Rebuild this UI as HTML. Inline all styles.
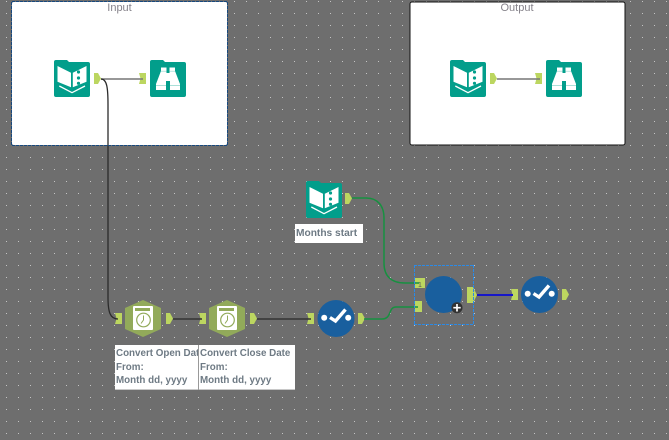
<!DOCTYPE html>
<html>
<head>
<meta charset="utf-8">
<style>
html,body{margin:0;padding:0;background:#6e6e6e}
body{width:669px;height:440px;overflow:hidden;position:relative;
background-image:linear-gradient(to bottom,transparent 1px,#6e6e6e 1px),linear-gradient(to right,#c4c4c4 1px,#6e6e6e 1px);
background-size:12px 12px,12px 12px;background-position:6px 1px,6px 1px}
svg{position:absolute;left:0;top:0;display:block}
text{font-family:"Liberation Sans",sans-serif}
.lb{font-size:9.8px;font-weight:bold;fill:#6e7a84}
.tt{font-size:11px;fill:#85828a}
.h,.v{position:absolute}
.h{height:1px;background:repeating-linear-gradient(to right,var(--c) 0 3px,transparent 3px 4px)}
.v{width:1px;background:repeating-linear-gradient(to bottom,var(--c) 0 3px,transparent 3px 4px)}
.s{--c:#2b8ae6}
.g{--c:#17497f}
</style>
</head>
<body>
<svg width="669" height="440" viewBox="0 0 669 440" xmlns="http://www.w3.org/2000/svg">
<defs>
<symbol id="book" viewBox="0 0 36 37" overflow="visible">
<path d="M2 0H13L15 2H34Q36 2 36 4V35Q36 37 34 37H2Q0 37 0 35V2Q0 0 2 0Z" fill="#029e8b"/>
<path d="M3.500 6L17 12.700V27.300L3.500 21.700Z" fill="#fff"/>
<path d="M32.500 6L18.800 12.700V27.300L32.500 21.700Z" fill="#fff"/>
<path d="M5.300 26L18 32.700L31 26" fill="none" stroke="#fff" stroke-width="1.300"/>
<circle cx="24.500" cy="12" r="1.600" fill="#029e8b"/>
<circle cx="24.500" cy="18" r="1.600" fill="#029e8b"/>
<circle cx="24.500" cy="23.300" r="1.600" fill="#029e8b"/>
</symbol>
<symbol id="bino" viewBox="0 0 36 37" overflow="visible">
<path d="M2 0H13L15 2H34Q36 2 36 4V35Q36 37 34 37H2Q0 37 0 35V2Q0 0 2 0Z" fill="#029e8b"/>
<path d="M11 7.500H16.500V13H19.500V7.500H25V11L30 24V30H20V21H16V30H6V24L11 11Z" fill="#fff"/>
<path d="M6 25.500H16M20 25.500H30" stroke="#8fd6cc" stroke-width="0.800"/>
<path d="M11 11.200H16.500M19.500 11.200H25" stroke="#8fd6cc" stroke-width="0.700"/>
</symbol>
<symbol id="hex" viewBox="0 0 37 37" overflow="visible">
<path d="M18 0L36 8V29L18 37L0 29V8Z" fill="#92aa5a"/>
<rect x="8" y="6" width="20" height="24" rx="1" fill="#fff"/>
<rect x="10" y="8" width="15" height="3" fill="#92aa5a"/>
<circle cx="18.500" cy="20" r="6.800" fill="none" stroke="#92aa5a" stroke-width="1.200"/>
<path d="M18.500 15.500V20L16 23.500" fill="none" stroke="#92aa5a" stroke-width="1"/>
</symbol>
<symbol id="chk" viewBox="0 0 37 37" overflow="visible">
<circle cx="18.500" cy="18.500" r="18.500" fill="#195f9e"/>
<circle cx="6.700" cy="17.700" r="3" fill="#fff"/>
<circle cx="30.700" cy="17.700" r="3" fill="#fff"/>
<path d="M12.500 17.500L18 21L28 9.500" fill="none" stroke="#fff" stroke-width="3.400"/>
</symbol>
<symbol id="out" viewBox="0 0 7 11" overflow="visible">
<path d="M0 0H4L7 5.500L4 11H0Z" fill="#bcd660"/>
</symbol>
<symbol id="inp" viewBox="0 0 7 11" overflow="visible">
<path d="M0 0H7V11H0L1.500 5.500Z" fill="#bcd660"/>
</symbol>
</defs>

<rect x="12" y="2" width="215" height="143" rx="2" fill="#fff"/>
<rect x="410" y="2" width="215" height="143" rx="2" fill="#fff" stroke="#111" stroke-width="1"/>
<text x="119.500" y="11" text-anchor="middle" class="tt">Input</text>
<text x="517" y="11" text-anchor="middle" class="tt">Output</text>

<rect x="295" y="224" width="68" height="19" fill="#fff"/>
<rect x="115" y="345" width="84" height="45" fill="#fff"/>
<rect x="199" y="345" width="96" height="45" fill="#fff"/>
<rect x="115" y="389" width="180" height="1" fill="#c8c8c8"/>
<rect x="198" y="345" width="1" height="45" fill="#999"/>

<svg x="115" y="345" width="83" height="45">
<text x="1" y="11" class="lb">Convert Open Date</text>
<text x="1" y="25" class="lb">From:</text>
<text x="1" y="38" class="lb">Month dd, yyyy</text>
</svg>
<text x="200" y="356" class="lb">Convert Close Date</text>
<text x="200" y="370" class="lb">From:</text>
<text x="200" y="383" class="lb">Month dd, yyyy</text>
<text x="296" y="236" class="lb" style="font-size:10.200px">Months start</text>

<use href="#book" x="54" y="60" width="36" height="37"/>
<use href="#bino" x="150" y="60" width="36" height="37"/>
<use href="#book" x="450" y="60" width="36" height="37"/>
<use href="#bino" x="546" y="60" width="36" height="37"/>
<use href="#book" x="306" y="181" width="36" height="37"/>

<use href="#out" x="94" y="73" width="7" height="11"/>
<use href="#inp" x="139" y="73" width="7" height="11"/>
<use href="#out" x="490" y="73" width="7" height="11"/>
<use href="#inp" x="535" y="73" width="7" height="11"/>
<use href="#out" x="345" y="193" width="7" height="11"/>

<use href="#hex" x="125" y="300" width="37" height="37"/>
<use href="#hex" x="209" y="300" width="37" height="37"/>
<use href="#chk" x="317.500" y="300" width="37" height="37"/>
<use href="#chk" x="521" y="276" width="37" height="37"/>
<circle cx="443.500" cy="294.500" r="18.500" fill="#195f9e"/>

<use href="#inp" x="115" y="313" width="7" height="11"/>
<use href="#out" x="166" y="313" width="7" height="11"/>
<use href="#inp" x="199" y="313" width="7" height="11"/>
<use href="#out" x="250" y="313" width="7" height="11"/>
<use href="#inp" x="307" y="313" width="7" height="11"/>
<use href="#out" x="358" y="313" width="7" height="11"/>
<rect x="415" y="278" width="10" height="10" fill="#bcd660"/>
<text x="418" y="287" font-size="7" fill="#555">1</text>
<rect x="415" y="301" width="7" height="11" fill="#bcd660"/>
<path d="M467 287H473L477 295L473 303H467Z" fill="#bcd660"/>
<use href="#inp" x="511" y="289" width="7" height="11"/>
<use href="#out" x="562" y="289" width="7" height="11"/>

<path d="M101 79H143" fill="none" stroke="#777" stroke-width="1.600"/>
<path d="M497 79H540" fill="none" stroke="#777" stroke-width="1.600"/>
<path d="M101 79C107 79 108 88 108 105V297C108 312 110 319 118 319" fill="none" stroke="#2b2b2b" stroke-width="1.300"/>
<path d="M173 319H202M257 319H311" fill="none" stroke="#333" stroke-width="1.600"/>
<path d="M352 198H366C378 198 384 206 384 218V263C384 276 391 283 405 283H419" fill="none" stroke="#179140" stroke-width="1.500"/>
<path d="M364 319H382C392 319 388 307 396 307H418" fill="none" stroke="#179140" stroke-width="1.500"/>
<path d="M477 295H513" fill="none" stroke="#1616c8" stroke-width="2"/>

<circle cx="457" cy="307.700" r="5.500" fill="#333"/>
<path d="M457 304V311.500M453.300 307.700H460.700" stroke="#fff" stroke-width="1.700"/>
</svg>
<div class="h g" style="left:12px;top:1px;width:215px"></div>
<div class="h g" style="left:12px;top:145px;width:215px"></div>
<div class="v g" style="left:11px;top:2px;height:143px"></div>
<div class="v g" style="left:227px;top:2px;height:143px"></div>
<div class="h s" style="left:414px;top:265px;width:60px"></div>
<div class="h s" style="left:414px;top:324px;width:60px"></div>
<div class="v s" style="left:414px;top:265px;height:60px"></div>
<div class="v s" style="left:473px;top:265px;height:60px"></div>
</body>
</html>
